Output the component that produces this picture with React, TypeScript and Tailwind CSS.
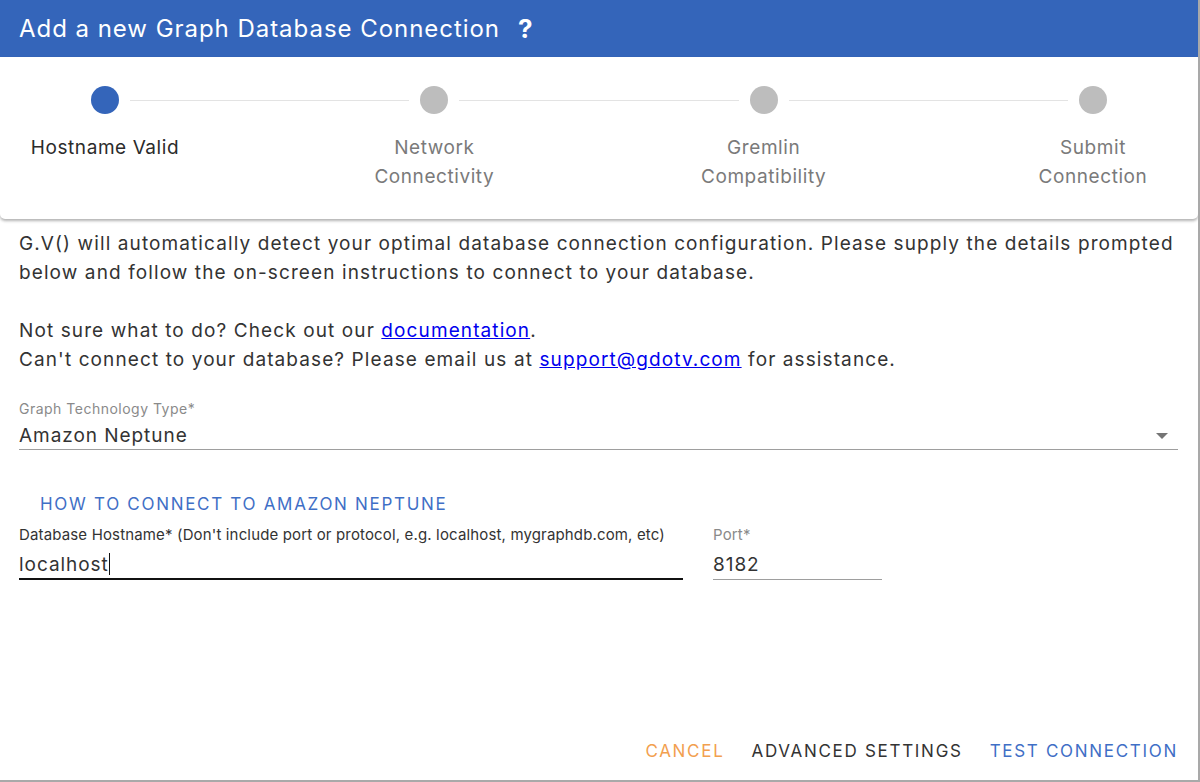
import React from 'react';

const steps = [
  { label: ['Hostname Valid'], active: true },
  { label: ['Network', 'Connectivity'], active: false },
  { label: ['Gremlin', 'Compatibility'], active: false },
  { label: ['Submit', 'Connection'], active: false },
];

const Stepper: React.FC = () => {
  return (
    <div className="h-[162px] shrink-0 bg-white rounded-b-[5px] shadow-[0_2px_3px_rgba(0,0,0,0.3)] flex items-start px-[24px] pt-[29px] relative z-10">
      {steps.map((s, i) => (
        <React.Fragment key={i}>
          {i > 0 && <div className="flex-1 -mx-[56px] mt-[14px] h-px bg-[#e3e3e3]" />}
          <div className="w-[162px] flex flex-col items-center">
            <div className={`w-[28px] h-[28px] rounded-full ${s.active ? 'bg-[#3465ba]' : 'bg-[#bdbdbd]'}`} />
            <div className={`mt-[19px] text-center text-[19px] leading-[29px] tracking-[0.03em] ${s.active ? 'text-[#2b2b2b]' : 'text-[#7a7a7a]'}`}>
              {s.label.map((l) => (
                <div key={l}>{l}</div>
              ))}
            </div>
          </div>
        </React.Fragment>
      ))}
    </div>
  );
};

const App: React.FC = () => {
  return (
    <div className="w-[1200px] h-[782px] bg-white flex flex-col font-['Inter',sans-serif] border-r-2 border-b-2 border-[#a9a9a9] overflow-hidden">
      <div className="h-[57px] shrink-0 bg-[#3465ba] px-[19px] flex items-center text-white text-[24px] tracking-[0.04em]">
        <span>Add a new Graph Database Connection</span>
        <span className="ml-[18px] font-bold text-[26px]">?</span>
      </div>
      <Stepper />

      <div className="flex-1 pl-[19px] pr-[8px] pt-[10px] text-[19px] leading-[29px] tracking-[0.058em] text-[#333333]">
        <p>
          G.V() will automatically detect your optimal database connection configuration. Please supply the details prompted
          below and follow the on-screen instructions to connect to your database.
        </p>
        <p className="mt-[29px]">
          Not sure what to do? Check out our{' '}
          <a href="#" className="text-[#0000ee] underline">documentation</a>.
        </p>
        <p>
          Can't connect to your database? Please email us at{' '}
          <a href="#" className="text-[#0000ee] underline">support@gdotv.com</a> for assistance.
        </p>

        <div className="mt-[26px] mr-[11px]">
          <div className="text-[14px] leading-[17px] tracking-[0.035em] text-[#8a8a8a]">Graph Technology Type*</div>
          <div className="mt-[4px] flex items-center justify-between border-b border-[#9e9e9e] h-[29px] mr-[1px]">
            <span className="text-[#333333] tracking-[0.05em]">Amazon Neptune</span>
            <svg width="14" height="8" viewBox="0 0 14 8" className="mr-[9px] mt-[2px]">
              <path d="M1 1 L7 7 L13 1 Z" fill="#757575" />
            </svg>
          </div>
        </div>

        <button className="mt-[42px] ml-[21px] text-[17px] leading-[24px] tracking-[0.1em] text-[#3f6fc6] uppercase">
          How to connect to Amazon Neptune
        </button>

        <div className="mt-[8px] flex gap-[30px]">
          <div className="w-[664px]">
            <div className="text-[15px] leading-[18px] tracking-[0.01em] text-[#333333]">
              Database Hostname* (Don't include port or protocol, e.g. localhost, mygraphdb.com, etc)
            </div>
            <div className="mt-[5px] h-[31px] border-b-2 border-[#111111] flex items-center pt-[1px] tracking-[0.05em]">
              <span>localhost</span>
              <span className="w-px h-[22px] bg-[#111111]" />
            </div>
          </div>
          <div className="w-[169px]">
            <div className="text-[15px] leading-[18px] tracking-[0.01em] text-[#8a8a8a]">Port*</div>
            <div className="mt-[5px] h-[31px] border-b border-[#9e9e9e] flex items-center pt-[1px] tracking-[0.05em]">
              <span>8182</span>
            </div>
          </div>
        </div>
      </div>

      <div className="flex justify-end items-center gap-[27px] pr-[20px] pb-[17px] text-[17px] leading-[24px] tracking-[0.1em] uppercase">
        <button className="text-[#f2a04f] uppercase">Cancel</button>
        <button className="text-[#333333] uppercase">Advanced Settings</button>
        <button className="text-[#3f6fc6] uppercase">Test Connection</button>
      </div>
    </div>
  );
};

export default App;
